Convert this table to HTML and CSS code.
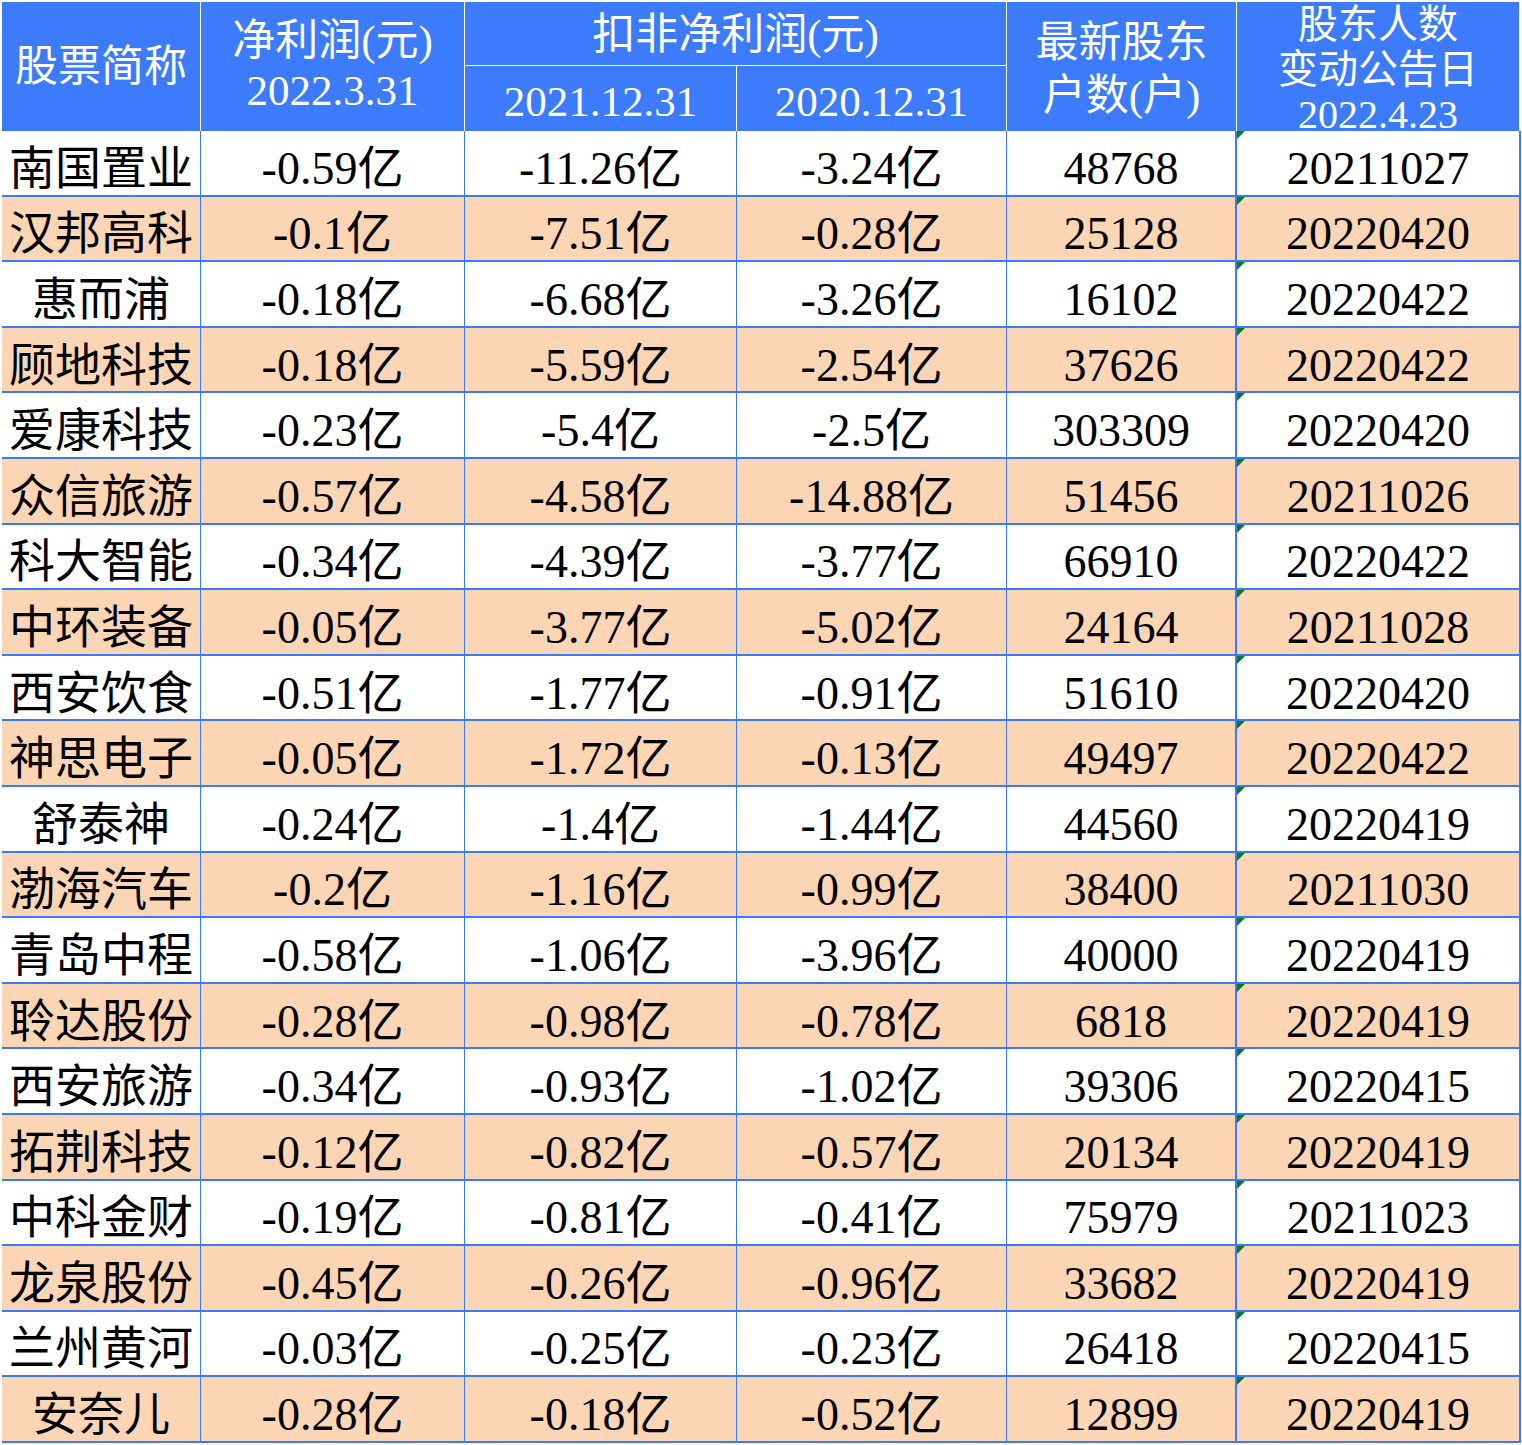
FILE: index.html
```html
<!DOCTYPE html>
<html lang="zh-CN">
<head>
<meta charset="utf-8">
<title>股东户数</title>
<link rel="stylesheet" href="styles.css">
</head>
<body>
<div class="sheet">
  <div class="h h-name">股票简称</div>
  <div class="h h-net"><span>净利润(元)</span><span>2022.3.31</span></div>
  <div class="h h-kf">扣非净利润(元)</div>
  <div class="h h-kf1">2021.12.31</div>
  <div class="h h-kf2">2020.12.31</div>
  <div class="h h-hold"><span>最新股东</span><span>户数(户)</span></div>
  <div class="h h-date"><span>股东人数</span><span>变动公告日</span><span>2022.4.23</span></div>

  <div class="row"><div class="c">南国置业</div><div class="c">-0.59亿</div><div class="c">-11.26亿</div><div class="c">-3.24亿</div><div class="c num">48768</div><div class="c date">20211027</div></div>
  <div class="row alt"><div class="c">汉邦高科</div><div class="c">-0.1亿</div><div class="c">-7.51亿</div><div class="c">-0.28亿</div><div class="c num">25128</div><div class="c date">20220420</div></div>
  <div class="row"><div class="c">惠而浦</div><div class="c">-0.18亿</div><div class="c">-6.68亿</div><div class="c">-3.26亿</div><div class="c num">16102</div><div class="c date">20220422</div></div>
  <div class="row alt"><div class="c">顾地科技</div><div class="c">-0.18亿</div><div class="c">-5.59亿</div><div class="c">-2.54亿</div><div class="c num">37626</div><div class="c date">20220422</div></div>
  <div class="row"><div class="c">爱康科技</div><div class="c">-0.23亿</div><div class="c">-5.4亿</div><div class="c">-2.5亿</div><div class="c num">303309</div><div class="c date">20220420</div></div>
  <div class="row alt"><div class="c">众信旅游</div><div class="c">-0.57亿</div><div class="c">-4.58亿</div><div class="c">-14.88亿</div><div class="c num">51456</div><div class="c date">20211026</div></div>
  <div class="row"><div class="c">科大智能</div><div class="c">-0.34亿</div><div class="c">-4.39亿</div><div class="c">-3.77亿</div><div class="c num">66910</div><div class="c date">20220422</div></div>
  <div class="row alt"><div class="c">中环装备</div><div class="c">-0.05亿</div><div class="c">-3.77亿</div><div class="c">-5.02亿</div><div class="c num">24164</div><div class="c date">20211028</div></div>
  <div class="row"><div class="c">西安饮食</div><div class="c">-0.51亿</div><div class="c">-1.77亿</div><div class="c">-0.91亿</div><div class="c num">51610</div><div class="c date">20220420</div></div>
  <div class="row alt"><div class="c">神思电子</div><div class="c">-0.05亿</div><div class="c">-1.72亿</div><div class="c">-0.13亿</div><div class="c num">49497</div><div class="c date">20220422</div></div>
  <div class="row"><div class="c">舒泰神</div><div class="c">-0.24亿</div><div class="c">-1.4亿</div><div class="c">-1.44亿</div><div class="c num">44560</div><div class="c date">20220419</div></div>
  <div class="row alt"><div class="c">渤海汽车</div><div class="c">-0.2亿</div><div class="c">-1.16亿</div><div class="c">-0.99亿</div><div class="c num">38400</div><div class="c date">20211030</div></div>
  <div class="row"><div class="c">青岛中程</div><div class="c">-0.58亿</div><div class="c">-1.06亿</div><div class="c">-3.96亿</div><div class="c num">40000</div><div class="c date">20220419</div></div>
  <div class="row alt"><div class="c">聆达股份</div><div class="c">-0.28亿</div><div class="c">-0.98亿</div><div class="c">-0.78亿</div><div class="c num">6818</div><div class="c date">20220419</div></div>
  <div class="row"><div class="c">西安旅游</div><div class="c">-0.34亿</div><div class="c">-0.93亿</div><div class="c">-1.02亿</div><div class="c num">39306</div><div class="c date">20220415</div></div>
  <div class="row alt"><div class="c">拓荆科技</div><div class="c">-0.12亿</div><div class="c">-0.82亿</div><div class="c">-0.57亿</div><div class="c num">20134</div><div class="c date">20220419</div></div>
  <div class="row"><div class="c">中科金财</div><div class="c">-0.19亿</div><div class="c">-0.81亿</div><div class="c">-0.41亿</div><div class="c num">75979</div><div class="c date">20211023</div></div>
  <div class="row alt"><div class="c">龙泉股份</div><div class="c">-0.45亿</div><div class="c">-0.26亿</div><div class="c">-0.96亿</div><div class="c num">33682</div><div class="c date">20220419</div></div>
  <div class="row"><div class="c">兰州黄河</div><div class="c">-0.03亿</div><div class="c">-0.25亿</div><div class="c">-0.23亿</div><div class="c num">26418</div><div class="c date">20220415</div></div>
  <div class="row alt"><div class="c">安奈儿</div><div class="c">-0.28亿</div><div class="c">-0.18亿</div><div class="c">-0.52亿</div><div class="c num">12899</div><div class="c date">20220419</div></div>
</div>
</body>
</html>
```
FILE: styles.css
```css
html, body {
  margin: 0;
  background: #ffffff;
}

body {
  padding: 2px 0 0 2px;
  font-family: "Liberation Serif", "Noto Sans CJK SC", serif;
  color: #000000;
}

.sheet {
  display: grid;
  grid-template-columns: 199px 264px 272px 270px 230px 284px;
  grid-template-rows: 64px 65px repeat(20, 65.6px);
  width: 1519px;
}

.h {
  background: #3c7cfc;
  color: #ffffff;
  font-size: 43px;
  line-height: 50px;
  display: flex;
  flex-direction: column;
  align-items: center;
  justify-content: center;
  text-align: center;
  white-space: nowrap;
  box-sizing: border-box;
  border-right: 1px solid #ffffff;
  min-height: 0;
}

.h-name { grid-column: 1; grid-row: 1 / 3; }
.h-net  { grid-column: 2; grid-row: 1 / 3; padding-bottom: 2px; }
.h-kf   { grid-column: 3 / 5; grid-row: 1; border-bottom: 1px solid #ffffff; padding-top: 2px; }
.h-kf1  { grid-column: 3; grid-row: 2; padding-top: 6px; }
.h-kf2  { grid-column: 4; grid-row: 2; padding-top: 6px; }
.h-hold { grid-column: 5; grid-row: 1 / 3; line-height: 53px; padding-top: 4px; }
.h-date {
  grid-column: 6;
  grid-row: 1 / 3;
  font-size: 40px;
  line-height: 45px;
  padding-top: 5px;
  border-right: 2px solid #ffffff;
}

.row {
  display: contents;
}

.c {
  display: flex;
  align-items: center;
  justify-content: center;
  font-size: 46px;
  line-height: 1;
  white-space: nowrap;
  box-sizing: border-box;
  border-right: 1px solid #3a7af5;
  border-bottom: 2px solid #3a7af5;
  padding-top: 12px;
  background: #ffffff;
}

.row.alt > .c {
  background: #fcd5b5;
}

.c.num {
  border-right-width: 2px;
}

.c.date {
  position: relative;
  border-right-width: 2px;
}

.c.date::before {
  content: "";
  position: absolute;
  left: 0;
  top: 0;
  width: 0;
  height: 0;
  border-top: 8px solid #0b7d12;
  border-right: 8px solid transparent;
}
```
